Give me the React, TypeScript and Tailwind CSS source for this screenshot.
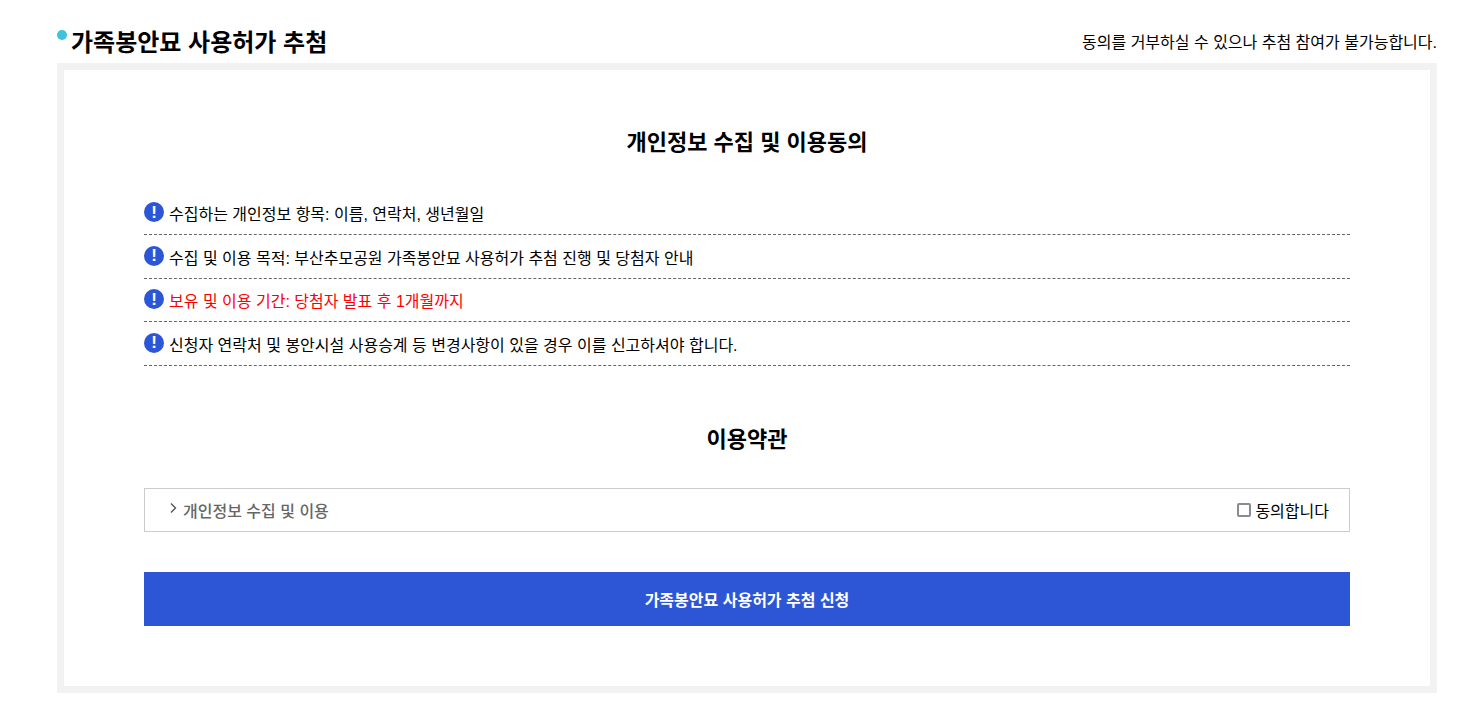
const font = { fontFamily: '"Liberation Sans", "Noto Sans CJK KR", sans-serif' };

const notices = [
  { text: '수집하는 개인정보 항목: 이름, 연락처, 생년월일' },
  { text: '수집 및 이용 목적: 부산추모공원 가족봉안묘 사용허가 추첨 진행 및 당첨자 안내' },
  { text: '보유 및 이용 기간: 당첨자 발표 후 1개월까지', red: true },
  { text: '신청자 연락처 및 봉안시설 사용승계 등 변경사항이 있을 경우 이를 신고하셔야 합니다.' },
];

const NoticeRow = ({ text, red }: { text: string; red?: boolean }) => (
  <li className="flex h-[43.5px] items-end border-b border-dashed border-[#666] pb-[8px]">
    <span className="mr-[5px] mb-[4px] flex h-5 w-5 items-center justify-center rounded-full bg-[#2d56d6] text-[17px] leading-none font-bold text-white">
      !
    </span>
    <span className={`text-[16px] leading-[22px] ${red ? 'text-[#ff0000]' : 'text-black'}`}>{text}</span>
  </li>
);

export default function App() {
  return (
    <div className="min-h-[725px] bg-white pt-[20px] pr-[44px] pl-[57px]" style={font}>
      <div className="flex h-[43px] items-end justify-between">
        <div className="relative pb-[4px] pl-[14px]">
          <span className="absolute top-[3px] left-0 h-[10px] w-[10px] rounded-full bg-[#3bc4dc]" />
          <h1 className="text-[24px] leading-[32px] font-bold text-black">가족봉안묘 사용허가 추첨</h1>
        </div>
        <p className="pb-[9px] text-[16px] leading-[22px] text-black">동의를 거부하실 수 있으나 추첨 참여가 불가능합니다.</p>
      </div>
      <div className="h-[630px] border-[7px] border-[#f2f2f2] px-[80px] pt-[57px]">
        <h2 className="text-center text-[22px] leading-[32px] font-bold text-black">개인정보 수집 및 이용동의</h2>
        <ul className="mt-[32.5px]">
          {notices.map((n) => (
            <NoticeRow key={n.text} text={n.text} red={n.red} />
          ))}
        </ul>
        <h2 className="mt-[58.5px] text-center text-[22px] leading-[32px] font-bold text-black">이용약관</h2>
        <div className="mt-[32px] flex h-11 items-center justify-between border border-[#ccc] pr-5 pl-[24px]">
          <div className="flex items-center gap-[5px]">
            <svg width="9" height="12" viewBox="0 0 9 12" fill="none" className="mb-[4px]">
              <path d="M2 1.5 L6.5 6 L2 10.5" stroke="#555" strokeWidth="1.4" />
            </svg>
            <span className="pt-[4px] text-[16px] leading-[22px] font-medium text-[#666]">개인정보 수집 및 이용</span>
          </div>
          <label className="flex items-center gap-[4px] text-[16px] leading-[22px] text-black">
            <span className="h-[14px] w-[14px] rounded-[2px] border-2 border-[#8a8a90]" />
            <span className="pt-[4px]">동의합니다</span>
          </label>
        </div>
        <button className="mt-10 block h-[54px] w-full bg-[#2d56d6] pt-[4px] text-center text-[16px] font-bold text-white">
          가족봉안묘 사용허가 추첨 신청
        </button>
      </div>
    </div>
  );
}
